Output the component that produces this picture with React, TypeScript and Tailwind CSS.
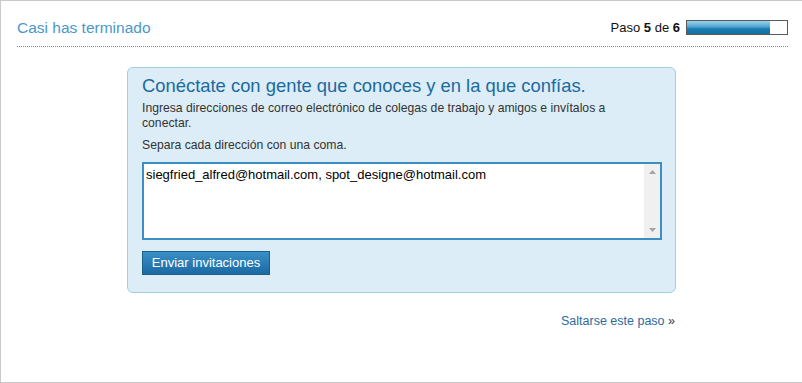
const emails = "siegfried_alfred@hotmail.com, spot_designe@hotmail.com";

const ProgressBar = ({ step, total }: { step: number; total: number }) => {
  return (
    <div className="h-[15px] w-[102px] border border-[#5a5a5a] bg-white">
      <div
        className="h-full bg-[linear-gradient(to_bottom,#9dd2ea_0%,#4ea6d2_45%,#1a7db0_60%,#156f9f_100%)]"
        style={{ width: `${(step / total) * 100}%` }}
      />
    </div>
  );
};

const FakeTextarea = () => {
  return (
    <div className="mt-[9px] flex h-[78px] w-[520px] border-2 border-[#3d8fc3] bg-white">
      <div className="flex-1 pl-[2px] pt-[3px] text-[13px] leading-[16px] text-black">
        {emails}
      </div>
      {/* scrollbar */}
      <div className="flex w-[16px] flex-col items-center justify-between bg-[#f0f0f0] py-[6px]">
        <svg width="7" height="4" viewBox="0 0 7 4">
          <path d="M0 4 L3.5 0 L7 4 Z" fill="#a3a3a3" />
        </svg>
        <svg width="7" height="4" viewBox="0 0 7 4">
          <path d="M0 0 L3.5 4 L7 0 Z" fill="#a3a3a3" />
        </svg>
      </div>
    </div>
  );
};

export default function App() {
  return (
    <div className="h-[383px] w-[802px] border-y border-l border-[#c9c9c9] bg-white font-['Liberation_Sans',Arial,sans-serif]">
      <div className="ml-4 mr-[14px] flex h-[46px] items-center justify-between border-b border-dotted border-[#8a8a8a] pt-2">
        <h1 className="text-[15.5px] leading-[20px] text-[#4a98c9]">Casi has terminado</h1>
        <div className="flex items-center gap-[6px]">
          <span className="text-[13px] text-[#111]">
            Paso <b>5</b> de <b>6</b>
          </span>
          <ProgressBar step={5} total={6} />
        </div>
      </div>

      <div className="mx-auto mt-5 w-[549px]">
        <div className="h-[226px] rounded-[6px] border border-[#a3cde2] bg-[#dcedf7] pl-[14px] pt-[7px]">
          <h2 className="text-[18.4px] leading-[22px] text-[#1b6aa0]">
            Conéctate con gente que conoces y en la que confías.
          </h2>
          <p className="mt-1 w-[500px] text-[12.2px] leading-[15px] text-[#333]">
            Ingresa direcciones de correo electrónico de colegas de trabajo y amigos e invítalos a
            conectar.
          </p>
          <p className="mt-[7px] text-[12.2px] leading-[15px] text-[#333]">
            Separa cada dirección con una coma.
          </p>
          <FakeTextarea />
          <button className="mt-[11px] h-[24px] w-[128px] border border-[#1b5f8c] bg-[linear-gradient(to_bottom,#3a8fc6,#1b6aa3)] text-[13px] text-white">
            Enviar invitaciones
          </button>
        </div>

        <div className="mt-[21px] pr-[1px] text-right text-[12.5px] leading-[15px]">
          <a href="#" className="text-[#2d6a9c]">
            Saltarse este paso
          </a>{" "}
          <span className="text-[#333]">»</span>
        </div>
      </div>
    </div>
  );
}
